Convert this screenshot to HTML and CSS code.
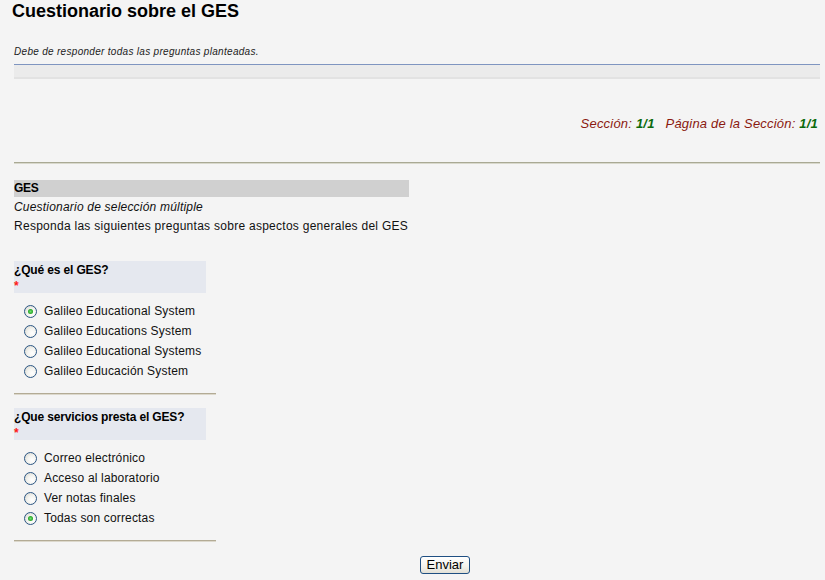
FILE: index.html
```html
<!DOCTYPE html>
<html lang="es">
<head>
<meta charset="utf-8">
<title>Cuestionario sobre el GES</title>
<link rel="stylesheet" href="styles.css">
</head>
<body>
<h1 class="title">Cuestionario sobre el GES</h1>
<div class="page">
  <p class="note">Debe de responder todas las preguntas planteadas.</p>
  <div class="note-bar"></div>
  <div class="pager">Sección: <b>1/1</b><span class="gap"></span>Página de la Sección: <b>1/1</b></div>
  <div class="sep"></div>
  <div class="section">
    <div class="section-head">GES</div>
    <div class="section-sub">Cuestionario de selección múltiple</div>
    <div class="section-desc">Responda las siguientes preguntas sobre aspectos generales del GES</div>
  </div>

  <div class="question first">
    <div class="q-head">
      <div class="q-title">¿Qué es el GES?</div>
      <div class="req">*</div>
    </div>
    <ul class="options">
      <li><span class="radio checked"></span>Galileo Educational System</li>
      <li><span class="radio"></span>Galileo Educations System</li>
      <li><span class="radio"></span>Galileo Educational Systems</li>
      <li><span class="radio"></span>Galileo Educación System</li>
    </ul>
    <div class="q-sep"></div>
  </div>

  <div class="question">
    <div class="q-head">
      <div class="q-title">¿Que servicios presta el GES?</div>
      <div class="req">*</div>
    </div>
    <ul class="options">
      <li><span class="radio"></span>Correo electrónico</li>
      <li><span class="radio"></span>Acceso al laboratorio</li>
      <li><span class="radio"></span>Ver notas finales</li>
      <li><span class="radio checked"></span>Todas son correctas</li>
    </ul>
    <div class="q-sep"></div>
  </div>

  <div class="actions"><button class="btn" type="button">Enviar</button></div>
</div>
</body>
</html>
```

FILE: styles.css
```css
html, body {
  margin: 0;
  padding: 0;
  background: #f4f4f4;
}
body {
  font-family: "Liberation Sans", Arial, sans-serif;
  color: #111;
}
.title {
  margin: 0;
  padding-left: 12px;
  font-size: 18px;
  line-height: 22px;
  font-weight: bold;
  color: #000;
}
.page {
  padding: 0 5px 0 14px;
}
.note {
  margin: 24px 0 0;
  font-size: 10px;
  line-height: 12px;
  font-style: italic;
  letter-spacing: 0.3px;
  color: #222;
}
.note-bar {
  margin-top: 6px;
  height: 12px;
  border-top: 1px solid #7f95c0;
  border-bottom: 2px solid #e2e2e2;
  background: #ebebeb;
}
.pager {
  margin-top: 37px;
  text-align: right;
  padding-right: 2px;
  font-size: 13px;
  line-height: 16px;
  font-style: italic;
  letter-spacing: 0.2px;
  color: #8b1a10;
}
.pager b {
  color: #0b6a0b;
}
.pager .gap {
  display: inline-block;
  width: 11px;
}
.sep {
  margin-top: 30px;
  height: 1px;
  background: #a9a994;
  border-bottom: 1px solid #d8d8cc;
}
.section {
  margin-top: 16px;
  width: 395px;
}
.section-head {
  background: #d0d0d0;
  height: 17px;
  line-height: 16px;
  font-size: 12px;
  font-weight: bold;
  letter-spacing: -0.3px;
  color: #000;
}
.section-sub {
  font-size: 12px;
  line-height: 19px;
  font-style: italic;
  letter-spacing: 0.2px;
  margin-top: 1px;
}
.section-desc {
  font-size: 12px;
  line-height: 19px;
  letter-spacing: 0.27px;
}
.question {
  width: 202px;
  margin-top: 13px;
}
.question.first {
  margin-top: 25px;
}
.q-head {
  width: 192px;
  height: 32px;
  background: #e5e8ef;
  padding-top: 1px;
  box-sizing: border-box;
}
.q-title {
  font-size: 12px;
  line-height: 16px;
  font-weight: bold;
  letter-spacing: -0.15px;
  color: #000;
}
.req {
  color: #ff1a1a;
  font-size: 12px;
  line-height: 10px;
  font-weight: bold;
  margin-top: 3px;
}
.options {
  list-style: none;
  margin: 8px 0 0;
  padding: 0 0 0 10px;
}
.options li {
  display: flex;
  align-items: center;
  height: 20px;
  font-size: 12px;
  letter-spacing: 0.17px;
  color: #111;
}
.radio {
  width: 11px;
  height: 11px;
  border: 1px solid #2b5683;
  border-radius: 50%;
  background: radial-gradient(circle at 65% 65%, #ffffff 0%, #f3f3ef 45%, #d2d2ca 100%);
  margin-right: 7px;
  position: relative;
  flex: none;
}
.radio.checked::after {
  content: "";
  position: absolute;
  left: 3px;
  top: 3px;
  width: 5px;
  height: 5px;
  border-radius: 50%;
  background: radial-gradient(circle, #6fe06f 0%, #21a121 70%, #178017 100%);
}
.q-sep {
  margin-top: 12px;
  height: 1px;
  background: #b3ab95;
  border-bottom: 1px solid #dcd8cc;
}
.actions {
  margin-top: 13px;
  text-align: center;
}
.btn {
  font-family: "Liberation Sans", Arial, sans-serif;
  font-size: 13px;
  line-height: 15px;
  height: 18px;
  padding: 0 6px;
  color: #000;
  border: 1px solid #1f4f82;
  border-radius: 3px;
  background: linear-gradient(#ffffff, #f3f2ec 60%, #e2e0d6);
  margin-left: 56px;
}
```
